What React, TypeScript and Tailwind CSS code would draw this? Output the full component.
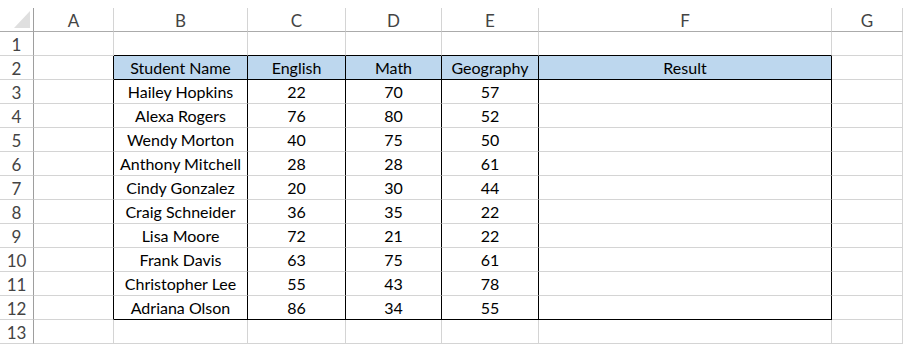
import React from 'react';

const cols = ['A', 'B', 'C', 'D', 'E', 'F', 'G'];

const students: [string, number, number, number][] = [
  ['Hailey Hopkins', 22, 70, 57],
  ['Alexa Rogers', 76, 80, 52],
  ['Wendy Morton', 40, 75, 50],
  ['Anthony Mitchell', 28, 28, 61],
  ['Cindy Gonzalez', 20, 30, 44],
  ['Craig Schneider', 36, 35, 22],
  ['Lisa Moore', 72, 21, 22],
  ['Frank Davis', 63, 75, 61],
  ['Christopher Lee', 55, 43, 78],
  ['Adriana Olson', 86, 34, 55],
];

// rows 1..13, columns A..G
function cellText(row: number, col: number): string {
  if (row === 2) return ['', 'Student Name', 'English', 'Math', 'Geography', 'Result', ''][col];
  if (row >= 3 && row <= 12 && col >= 1 && col <= 4) {
    const s = students[row - 3];
    return String(s[col - 1]);
  }
  return '';
}

const inTable = (row: number, col: number) => row >= 2 && row <= 12 && col >= 1 && col <= 5;

function Cell({ row, col }: { row: number; col: number }) {
  const t = inTable(row, col);
  const rightBlack = (t || (row >= 2 && row <= 12 && col === 0));
  const bottomBlack = (row === 1 && col >= 1 && col <= 5) || (t && (row === 2 || row === 12));
  return (
    <div
      className={`h-6 flex items-center justify-center pt-[1px] text-[16px] leading-none text-black whitespace-nowrap overflow-hidden border-r border-b ${
        rightBlack ? 'border-r-black' : 'border-r-[#d4d4d4]'
      } ${bottomBlack ? 'border-b-black' : 'border-b-[#d4d4d4]'} ${row === 2 && t ? 'bg-[#bdd7ee]' : 'bg-white'}`}
    >
      {cellText(row, col)}
    </div>
  );
}

export default function App() {
  const rows = Array.from({ length: 13 }, (_, i) => i + 1);
  return (
    <div className="w-[903px] h-[344px] bg-white overflow-hidden" style={{ fontFamily: 'Lato, "Open Sans", sans-serif' }}>
      <div className="h-2" />
      <div className="grid grid-cols-[34px_80px_134px_98px_96px_97px_293px_71px]">
        <div className="h-6 flex items-start justify-end pr-[3px] pt-[3px] border-r border-b border-r-[#9e9e9e] border-b-[#ababab]">
          <svg width="16" height="17" viewBox="0 0 16 17">
            <polygon points="16,0 16,17 0,17" fill="#dfdfdf" />
          </svg>
        </div>
        {cols.map((c) => (
          <div
            key={c}
            className="h-6 flex items-center justify-center pt-[2px] text-[17px] leading-none text-[#444] border-r border-b border-r-[#d4d4d4] border-b-[#ababab]"
          >
            {c}
          </div>
        ))}
        {rows.map((r) => (
          <React.Fragment key={r}>
            <div className="h-6 flex items-center justify-center pt-[2px] text-[17px] leading-none text-[#444] border-r border-b border-r-[#9e9e9e] border-b-[#d4d4d4]">
              {r}
            </div>
            {cols.map((_, ci) => (
              <Cell key={ci} row={r} col={ci} />
            ))}
          </React.Fragment>
        ))}
      </div>
    </div>
  );
}
